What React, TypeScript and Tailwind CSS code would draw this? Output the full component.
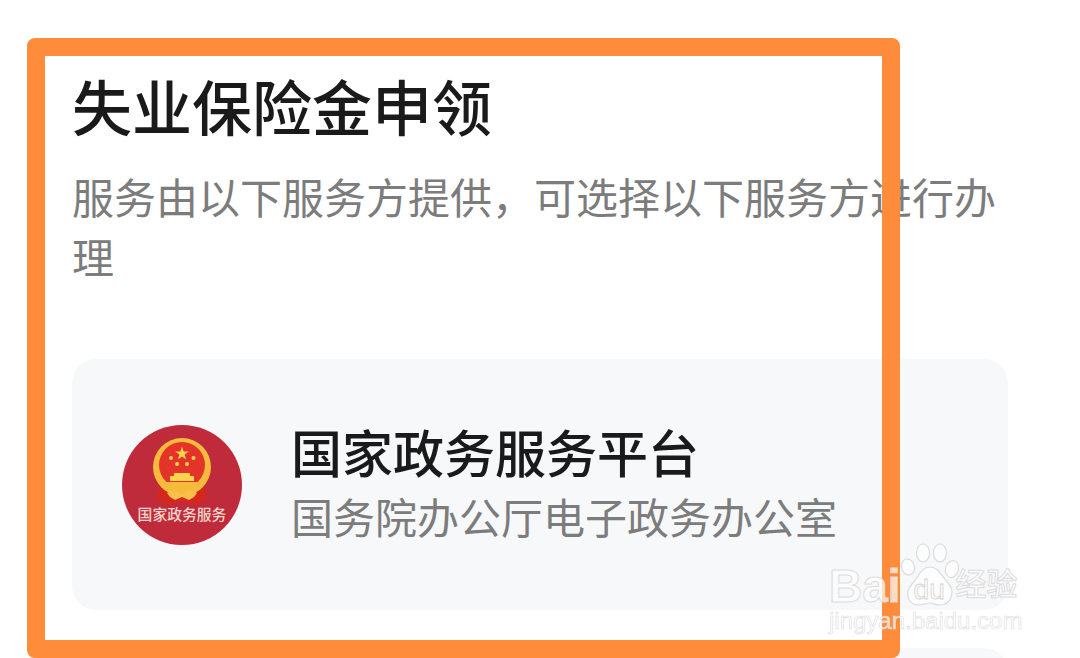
import React from 'react';

const CJK = "font-['Roboto','Noto_Sans_CJK_SC',sans-serif]";

function Emblem() {
  // 国徽 simplified, coordinates follow the 120px circle
  return (
    <svg width="120" height="120" viewBox="0 0 120 120" className="absolute left-0 top-0">
      <circle cx="60" cy="60" r="60" fill="#c02b3b" />
      <path d="M37 62 L35 74 L46 80 L60 76 L74 80 L85 74 L83 62 Z" fill="#d4281f" />
      <circle cx="60" cy="42" r="29" fill="#f6bb3c" />
      <circle cx="60" cy="40" r="23" fill="#e4342a" />
      <path d="M60 21.5 L61.6 26.4 L66.8 26.4 L62.6 29.5 L64.2 34.4 L60 31.4 L55.8 34.4 L57.4 29.5 L53.2 26.4 L58.4 26.4 Z" fill="#fbd34d" />
      <circle cx="49" cy="33" r="2" fill="#fbd34d" />
      <circle cx="71.5" cy="33" r="2" fill="#fbd34d" />
      <circle cx="55" cy="39" r="2" fill="#fbd34d" />
      <circle cx="65" cy="39" r="2" fill="#fbd34d" />
      <path d="M52 48 H68 V51 H72 V56 H48 V51 H52 Z" fill="#fbd34d" />
      <path d="M38 57 H82 L78 65 H42 Z" fill="#f6bb3c" />
      <path d="M45 68 C50 63 56 66 60 70 C64 66 70 63 75 68 L72 72 L67 75 L60 72 L53 75 L48 72 Z" fill="#f6c04a" />
    </svg>
  );
}

function Paw() {
  return (
    <svg width="60" height="64" viewBox="0 0 60 64" className="shrink-0">
      <g fill="#ffffff" fillOpacity="0.75" stroke="#dcdcdc" strokeWidth="1.2">
        <ellipse cx="8" cy="24" rx="6.5" ry="8" transform="rotate(-15 8 24)" />
        <ellipse cx="23" cy="10" rx="6.5" ry="9" />
        <ellipse cx="40" cy="10" rx="6.5" ry="9" />
        <ellipse cx="52" cy="26" rx="6.5" ry="8.5" transform="rotate(15 52 26)" />
        <path d="M30 24 C39 24 42 34 48 40 C56 48 51 62 40 62 C35 62 33 60 30 60 C26 60 24 62 19 62 C8 62 4 50 12 41 C18 35 21 24 30 24 Z" />
      </g>
    </svg>
  );
}

export default function App() {
  return (
    <div className={`relative h-[658px] w-[1080px] overflow-hidden bg-white pl-[72px] pt-[79px] ${CJK}`}>
      <h1 className="text-[60px] font-medium leading-[64px] text-[#1a1a1a]">失业保险金申领</h1>
      <p className="mt-[27px] w-[936px] text-[42px] leading-[60px] text-[#7c7c7c]">
        服务由以下服务方提供，可选择以下服务方进行办理
      </p>

      <div className="mt-[69px] flex h-[251px] w-[936px] items-center rounded-[24px] bg-[#f7f8fa] pl-[50px]">
        <div className="relative h-[120px] w-[120px] shrink-0">
          <Emblem />
          <span className="absolute left-0 top-[81px] w-full text-center text-[14.8px] font-medium leading-[18px] text-[#f6d5cd]">
            国家政务服务
          </span>
        </div>
        <div className="ml-[49px] mt-[5px]">
          <div className="text-[51px] font-medium leading-[62px] text-[#1a1a1a]">国家政务服务平台</div>
          <div className="mt-[4px] text-[42px] leading-[58px] text-[#7c7c7c]">国务院办公厅电子政务办公室</div>
        </div>
      </div>

      <div className="mt-[38px] h-[120px] w-[936px] rounded-[24px] bg-[#f7f8fa]" />

      {/* 橙色标注框 */}
      <div className="absolute left-[27px] top-[38px] h-[620px] w-[873px] rounded-[8px] border-[18px] border-[#ff8c3a]" />

      {/* 水印 */}
      <div className="absolute left-[829px] top-[543px] w-[200px]">
        <div className="flex items-end">
          <span className="font-['Liberation_Sans',sans-serif] text-[46px] font-bold leading-[42px] text-white/70 [-webkit-text-stroke:1px_#dcdcdc]">Bai</span>
          <div className="relative -ml-[1px] shrink-0">
            <Paw />
            <span className="absolute left-[14px] top-[33px] font-['Liberation_Sans',sans-serif] text-[28px] leading-[28px] text-white/70 [-webkit-text-stroke:0.8px_#d4d4d4]">du</span>
          </div>
          <span className="-ml-[4px] text-[31px] font-medium leading-[44px] text-white/70 [-webkit-text-stroke:1px_#dcdcdc]">经验</span>
        </div>
        <div className="font-['Liberation_Sans',sans-serif] text-[24px] leading-[28px] text-white/70 [-webkit-text-stroke:0.6px_#dcdcdc]">
          jingyan.baidu.com
        </div>
      </div>
    </div>
  );
}
